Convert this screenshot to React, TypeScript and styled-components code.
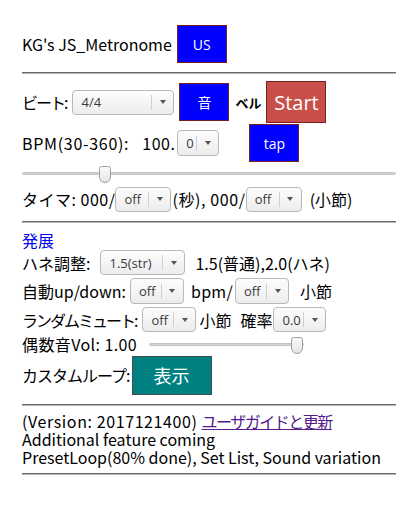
import React from 'react'
import styled, { createGlobalStyle } from 'styled-components'

const GlobalStyle = createGlobalStyle`
  html, body {
    margin: 0;
    padding: 0;
    background: #ffffff;
  }
  body {
    font-family: "Noto Sans CJK JP", "Noto Sans", sans-serif;
    font-size: 16px;
    color: #000000;
  }
`

const Page = styled.div`
  width: 374px;
  padding: 25px 21px 0 22px;
`

const Row = styled.div<{ $h: number; $gap?: number }>`
  display: flex;
  align-items: center;
  height: ${(p) => p.$h}px;
  gap: ${(p) => p.$gap ?? 0}px;
  white-space: nowrap;
`

const Rule = styled.hr<{ $top: number; $bottom: number }>`
  height: 0;
  margin: ${(p) => p.$top}px 0 ${(p) => p.$bottom}px;
  border: none;
  border-top: 1px solid #6a6a6a;
  border-bottom: 1px solid #b4b4b4;
`

// ls: letter-spacing, for the places where the reference runs wider or tighter
const Text = styled.span<{ $ml?: number; $mr?: number; $ls?: number }>`
  margin-left: ${(p) => p.$ml ?? 0}px;
  margin-right: ${(p) => p.$mr ?? 0}px;
  letter-spacing: ${(p) => p.$ls ?? 0}px;
`

const Bell = styled.span`
  font-size: 13px;
  font-weight: 700;
  margin: 0 5px 0 6px;
`

const Heading = styled.div`
  color: #0000ee;
  height: 18px;
  line-height: 18px;
  margin-top: 8px;
`

const Btn = styled.button<{ $w: number; $h: number; $bg: string; $fs: number; $dotted?: boolean }>`
  width: ${(p) => p.$w}px;
  height: ${(p) => p.$h}px;
  background: ${(p) => p.$bg};
  border: 1px ${(p) => (p.$dotted ? 'dotted' : 'solid')} #7a1f1f;
  color: #ffffff;
  font-family: "Open Sans", "Noto Sans CJK JP", sans-serif;
  font-size: ${(p) => p.$fs}px;
  padding: 0;
  margin: 0;
  flex: none;
`

const SelectBox = styled.div<{ $w: number; $h?: number; $fs?: number; $ml?: number }>`
  display: flex;
  align-items: center;
  flex: none;
  box-sizing: border-box;
  width: ${(p) => p.$w}px;
  height: ${(p) => p.$h ?? 25}px;
  margin-left: ${(p) => p.$ml ?? 0}px;
  border: 1px solid #b9b9b9;
  border-radius: 4px;
  background: linear-gradient(#fdfdfd, #ececec);
  font-family: "Open Sans", "DejaVu Sans", sans-serif;
  font-size: ${(p) => p.$fs ?? 13}px;
  color: #3a3a3a;
`

const SelectValue = styled.span`
  flex: 1;
  padding-left: 8px;
  overflow: hidden;
`

const SelectArrow = styled.span`
  display: flex;
  align-items: center;
  justify-content: center;
  width: 21px;
  height: 15px;
  border-left: 1px solid #cfcfcf;
  &::after {
    content: '';
    border-left: 3.5px solid transparent;
    border-right: 3.5px solid transparent;
    border-top: 4px solid #555;
  }
`

const Select: React.FC<{ value: string; w: number; h?: number; fs?: number; ml?: number }> = ({
  value,
  w,
  h,
  fs,
  ml,
}) => (
  <SelectBox $w={w} $h={h} $fs={fs} $ml={ml}>
    <SelectValue>{value}</SelectValue>
    <SelectArrow />
  </SelectBox>
)

const Range = styled.input<{ $w: number; $ml?: number }>`
  -webkit-appearance: none;
  appearance: none;
  width: ${(p) => p.$w}px;
  height: 20px;
  margin: 0 0 0 ${(p) => p.$ml ?? 0}px;
  background: transparent;
  &::-webkit-slider-runnable-track {
    height: 3px;
    background: #d4d4d4;
    border: 1px solid #c2c2c2;
    border-radius: 2px;
  }
  &::-webkit-slider-thumb {
    -webkit-appearance: none;
    width: 12px;
    height: 17px;
    margin-top: -7px;
    background: linear-gradient(#fafafa, #e4e4e4);
    border: 1px solid #a0a0a0;
    border-radius: 3px 3px 7px 7px;
  }
`

const Link = styled.a`
  color: #551a8b;
  text-decoration: underline;
  margin-left: 4px;
  letter-spacing: -1.5px;
`

const Footer = styled.div`
  line-height: 18px;
  white-space: nowrap;
`

export default function App() {
  return (
    <Page>
      <GlobalStyle />
      <Row $h={38} $gap={5}>
        <Text>KG's JS_Metronome</Text>
        <Btn $w={50} $h={38} $bg="#0000ff" $fs={14}>US</Btn>
      </Row>
      <Rule $top={9} $bottom={7} />
      <Row $h={42}>
        <Text $mr={6} $ls={-2}>ビート:</Text>
        <Select value="4/4" w={102} />
        <Btn $w={50} $h={38} $bg="#0000ff" $fs={14} style={{ marginLeft: 5 }}>音</Btn>
        <Bell>ベル</Bell>
        <Btn $w={60} $h={42} $bg="#c9504a" $fs={20}>Start</Btn>
      </Row>
      <Row $h={40}>
        <Text $ls={0.7}>BPM(30-360):</Text>
        <Text $ml={13} $ls={0.5}>100.</Text>
        <Select value="0" w={42} h={26} ml={2} />
        <Btn $w={50} $h={38} $bg="#0000ff" $fs={14} style={{ marginLeft: 30 }}>tap</Btn>
      </Row>
      <Row $h={20}>
        <Range type="range" min={30} max={360} defaultValue={100} $w={376} readOnly />
      </Row>
      <Row $h={32}>
        <Text $ls={0.5}>タイマ:&nbsp;000/</Text>
        <Select value="off" w={56} />
        <Text $ml={1} $ls={0.6}>(秒), 000/</Text>
        <Select value="off" w={56} />
        <Text $ml={8}>(小節)</Text>
      </Row>
      <Rule $top={6} $bottom={0} />
      <Heading>発展</Heading>
      <Row $h={27}>
        <Text $mr={10}>ハネ調整:</Text>
        <Select value="1.5(str)" w={85} h={25} />
        <Text $ml={10}>1.5(普通),2.0(ハネ)</Text>
      </Row>
      <Row $h={30}>
        <Text $mr={4}>自動up/down:</Text>
        <Select value="off" w={54} h={26} />
        <Text $ml={7} $mr={2} $ls={0.3}>bpm/</Text>
        <Select value="off" w={54} h={26} />
        <Text $ml={11}>小節</Text>
      </Row>
      <Row $h={27}>
        <Text $mr={6} $ls={-2}>ランダムミュート:</Text>
        <Select value="off" w={54} />
        <Text $ml={3}>小節</Text>
        <Text $ml={9} $mr={1}>確率</Text>
        <Select value="0.0" w={53} />
      </Row>
      <Row $h={22}>
        <Text $ls={0.4}>偶数音Vol: 1.00</Text>
        <Range type="range" min={0} max={1} step={0.01} defaultValue={1} $w={155} $ml={12} readOnly />
      </Row>
      <Row $h={40}>
        <Text $mr={2} $ls={-1}>カスタムループ:</Text>
        <Btn $w={80} $h={39} $bg="#008080" $fs={18} $dotted>表示</Btn>
      </Row>
      <Rule $top={9} $bottom={6} />
      <Footer>
        <div>
          <Text $ls={0.6}>(Version: 2017121400)</Text>
          <Link href="#">ユーザガイドと更新</Link>
        </div>
        <div>Additional feature coming</div>
        <div>PresetLoop(80% done), Set List, Sound variation</div>
      </Footer>
      <Rule $top={7} $bottom={0} />
    </Page>
  )
}
